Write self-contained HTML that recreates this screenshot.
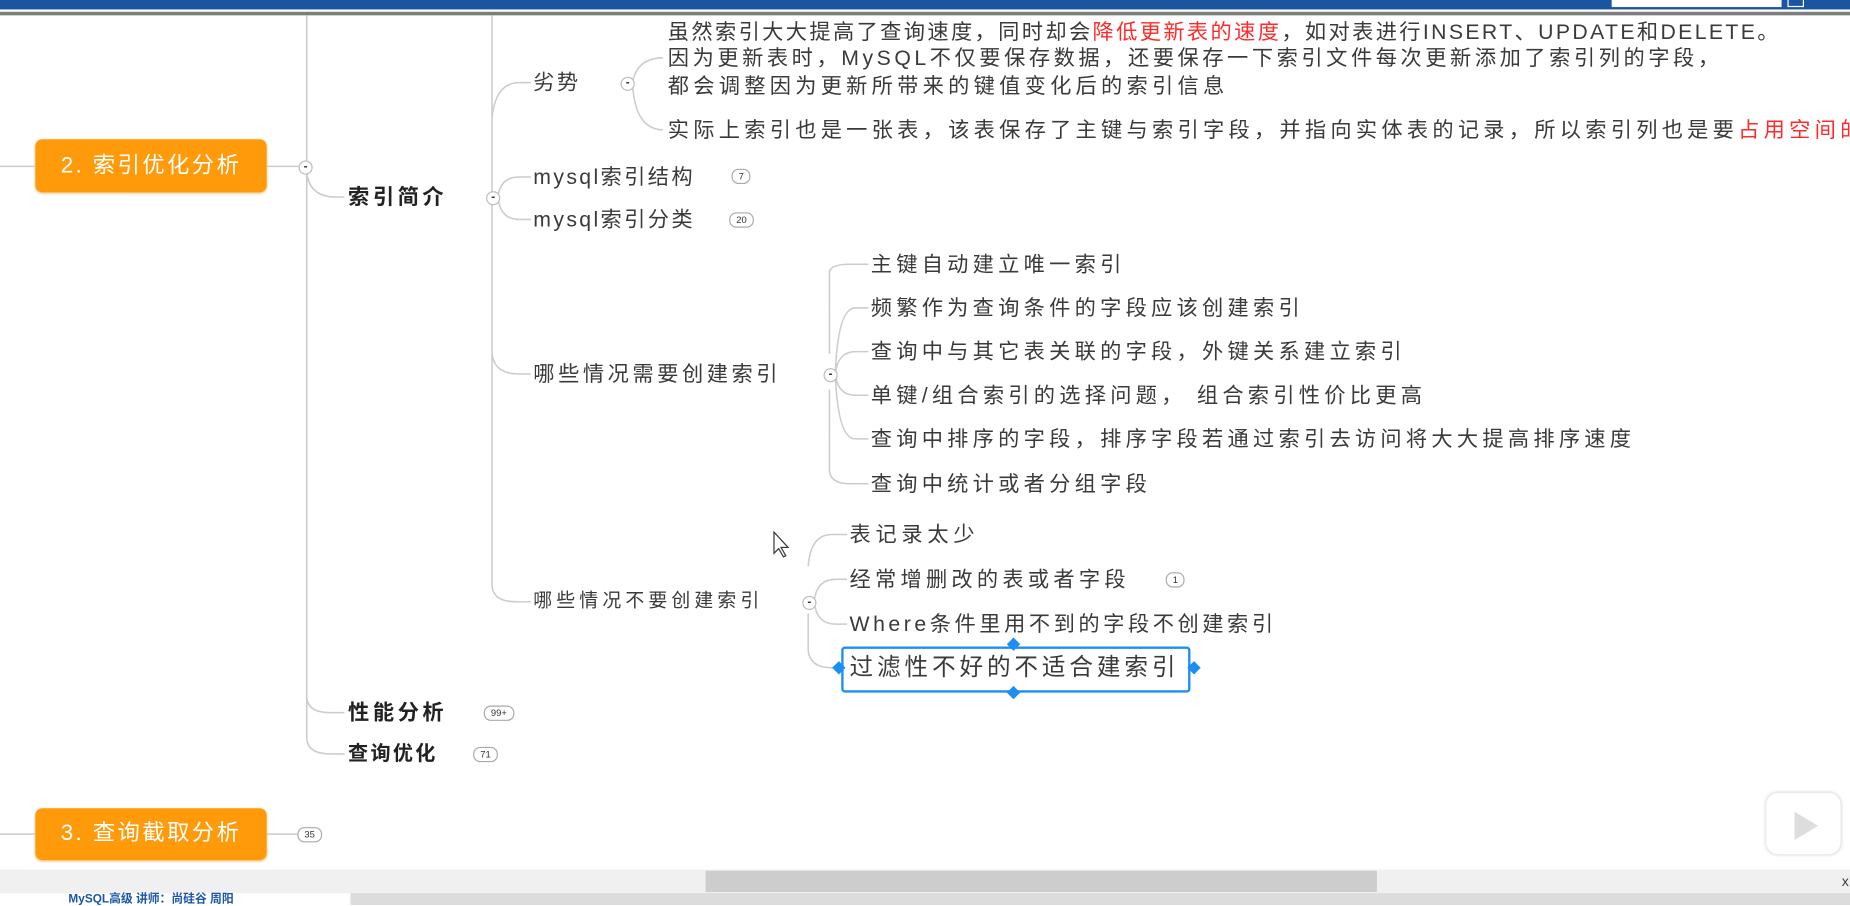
<!DOCTYPE html>
<html><head><meta charset="utf-8"><style>
html,body{margin:0;padding:0;width:1850px;height:905px;overflow:hidden;background:#fff}
#w{position:absolute;left:0;top:0;width:1568px;height:767px;transform:scale(1.17985);transform-origin:0 0;font-family:"Liberation Sans","Noto Sans CJK SC",sans-serif;color:#333}
.t{position:absolute;white-space:nowrap;font-size:18px;letter-spacing:3.6px;line-height:22px;color:#3a3a3a}
.b{font-weight:bold;font-size:18px;letter-spacing:3px;color:#222}
.r{color:#ff2a2a}
.c{position:absolute;width:10px;height:10px;border:1px solid #bbb;border-radius:50%;background:#fff;font-size:10px;line-height:9px;text-align:center;color:#333;font-weight:bold}
.bd{position:absolute;height:11px;border:1px solid #aaa;border-radius:6px;font-size:8px;line-height:11px;padding:0 5px;color:#333;background:#fff}
.o{position:absolute;background:#ff9a0a;border-radius:6px;color:#fff;font-size:19px;letter-spacing:2px;text-align:center;box-shadow:0 1px 2px #f0c080}
</style></head><body><div id="w">
<div style="position:absolute;left:0;top:0;width:1568px;height:8px;background:#1b55a0"></div>
<div style="position:absolute;left:1366px;top:0;width:144px;height:6px;background:#fff"></div>
<div style="position:absolute;left:1515px;top:0;width:12px;height:5px;border:1px solid #fff;border-top:0"></div>
<div style="position:absolute;left:0;top:10px;width:1568px;height:3px;background:#7d7d7d"></div>
<svg style="position:absolute;left:0;top:0" width="1568" height="767" fill="none" stroke="#ccc" stroke-width="1.3">
<path d="M0 141H30M226 141H253"/>
<path d="M260 13V590Q260 604 280 604H292M260 580V625Q260 639 280 639H292"/>
<path d="M260 146Q262 167 285 167H292"/>
<path d="M417 13V495Q417 510 437 510H450"/>
<path d="M422 167Q424 150 440 150H450M422 167Q424 186 440 186H450"/>
<path d="M417 100Q420 70 440 70H450"/>
<path d="M536 70Q540 49 562 49M536 70Q538 110 562 110"/>
<path d="M703 300V230Q705 224 720 224H736M708 317Q710 261 725 261H736M708 317Q710 298 725 298H736M708 317Q710 335 725 335H736M708 317Q710 372 725 372H736M703 330V400Q705 410 720 410H736"/>
<path d="M417 300Q419 317 440 317H450"/>
<path d="M685 480Q687 453 705 453H718M690 510Q692 491 708 491H718M690 510Q692 529 708 529H718M685 520V552Q687 566 705 566H711"/>
<path d="M0 707H30M226 707H252"/>
</svg>
<div class="o" style="left:30px;top:118px;width:196px;height:45px;line-height:45px">2. 索引优化分析</div>
<div class="c" style="left:253px;top:136px">-</div>
<div class="t b" style="left:295px;top:156px">索引简介</div>
<div class="c" style="left:412px;top:162px">-</div>
<div class="t" style="left:452px;top:59px;letter-spacing:2px">劣势</div>
<div class="c" style="left:526px;top:65px">-</div>
<div class="t" style="left:566px;top:16px;letter-spacing:2px">虽然索引大大提高了查询速度，同时却会<span class="r">降低更新表的速度</span>，如对表进行INSERT、UPDATE和DELETE。</div>
<div class="t" style="left:566px;top:38px;letter-spacing:3px">因为更新表时，MySQL不仅要保存数据，还要保存一下索引文件每次更新添加了索引列的字段，</div>
<div class="t" style="left:566px;top:62px">都会调整因为更新所带来的键值变化后的索引信息</div>
<div class="t" style="left:566px;top:99px">实际上索引也是一张表，该表保存了主键与索引字段，并指向实体表的记录，所以索引列也是要<span class="r">占用空间的</span></div>
<div class="t" style="left:452px;top:139px;letter-spacing:2px">mysql索引结构</div><div class="bd" style="left:620px;top:143px">7</div>
<div class="t" style="left:452px;top:175px;letter-spacing:2px">mysql索引分类</div><div class="bd" style="left:618px;top:180px">20</div>
<div class="t" style="left:452px;top:306px;letter-spacing:3px">哪些情况需要创建索引</div>
<div class="c" style="left:698px;top:312px">-</div>
<div class="t" style="left:738px;top:213px">主键自动建立唯一索引</div>
<div class="t" style="left:738px;top:250px">频繁作为查询条件的字段应该创建索引</div>
<div class="t" style="left:738px;top:287px">查询中与其它表关联的字段，外键关系建立索引</div>
<div class="t" style="left:738px;top:324px">单键/组合索引的选择问题， 组合索引性价比更高</div>
<div class="t" style="left:738px;top:361px">查询中排序的字段，排序字段若通过索引去访问将大大提高排序速度</div>
<div class="t" style="left:738px;top:399px">查询中统计或者分组字段</div>
<div class="t" style="left:452px;top:499px;font-size:16px;letter-spacing:3.5px">哪些情况不要创建索引</div>
<div class="c" style="left:680px;top:505px">-</div>
<div class="t" style="left:720px;top:442px;letter-spacing:4px">表记录太少</div>
<div class="t" style="left:720px;top:480px">经常增删改的表或者字段</div><div class="bd" style="left:988px;top:485px">1</div>
<div class="t" style="left:720px;top:518px;letter-spacing:3px">Where条件里用不到的字段不创建索引</div>
<div style="position:absolute;left:713px;top:548px;width:292px;height:35px;border:2px solid #1e8ef0;border-radius:3px;background:#fff"></div>
<div class="t" style="left:720px;top:554px;font-size:20px;letter-spacing:3.3px;line-height:24px">过滤性不好的不适合建索引</div>
<div style="position:absolute;left:855px;top:542px;width:8px;height:8px;background:#1e8ef0;transform:rotate(45deg)"></div>
<div style="position:absolute;left:855px;top:583px;width:8px;height:8px;background:#1e8ef0;transform:rotate(45deg)"></div>
<div style="position:absolute;left:707px;top:562px;width:8px;height:8px;background:#1e8ef0;transform:rotate(45deg)"></div>
<div style="position:absolute;left:1008px;top:562px;width:8px;height:8px;background:#1e8ef0;transform:rotate(45deg)"></div>
<svg style="position:absolute;left:655px;top:450px" width="14" height="24"><path d="M1 1V19L5 15L9 22L11 21L7 14H13Z" fill="#fff" stroke="#333"/></svg>
<div class="t b" style="left:295px;top:593px">性能分析</div><div class="bd" style="left:410px;top:598px">99+</div>
<div class="t b" style="left:295px;top:628px;font-size:17px;letter-spacing:2px">查询优化</div><div class="bd" style="left:401px;top:633px">71</div>
<div class="o" style="left:30px;top:685px;width:196px;height:44px;line-height:44px">3. 查询截取分析</div>
<div class="bd" style="left:252px;top:701px">35</div>
<div style="position:absolute;left:1497px;top:672px;width:63px;height:52px;background:#fff;border-radius:10px;box-shadow:0 0 3px #ccc"></div>
<svg style="position:absolute;left:1518px;top:686px" width="26" height="28"><path d="M3 2L23 14L3 26Z" fill="#ddd"/></svg>
<div style="position:absolute;left:0;top:737px;width:1568px;height:20px;background:#f0f0f0"></div>
<div style="position:absolute;left:598px;top:738px;width:569px;height:18px;background:#cdcdcd"></div>
<div class="t" style="left:1561px;top:736px;font-size:12px;letter-spacing:0">x</div>
<div style="position:absolute;left:0;top:757px;width:1568px;height:10px;background:#dcdcdc"></div>
<div style="position:absolute;left:0;top:757px;width:297px;height:10px;background:#fff"></div>
<div class="t" style="left:58px;top:758px;font-size:10px;letter-spacing:0;line-height:10px;color:#1a55a8;font-weight:bold">MySQL高级 讲师：尚硅谷 周阳</div>
</div></body></html>
